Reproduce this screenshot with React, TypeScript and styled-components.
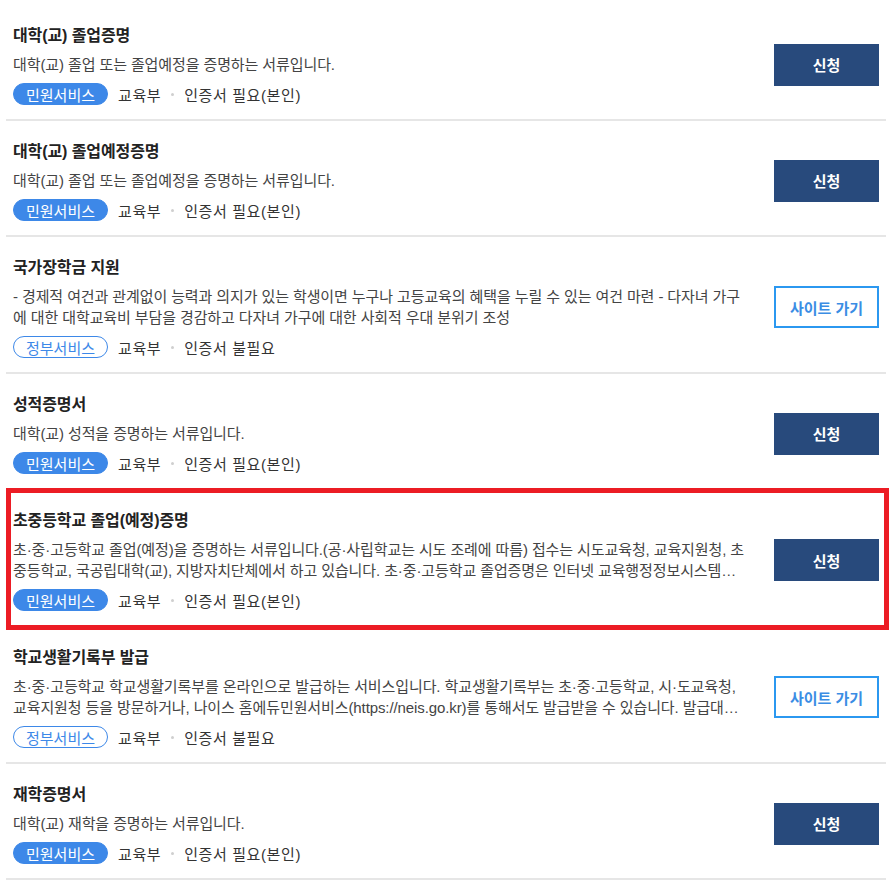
import React from "react";
import styled, { createGlobalStyle } from "styled-components";

const GlobalStyle = createGlobalStyle`
  * { box-sizing: border-box; }
  body {
    margin: 0;
    background: #ffffff;
    font-family: "Liberation Sans", "Noto Sans CJK KR", sans-serif;
    color: #333;
  }
`;

type Kind = "civil" | "gov";
type Action = "apply" | "site";

interface Service {
  title: string;
  desc: string;
  kind: Kind;
  cert: string;
  action: Action;
  highlighted?: boolean;
}

const services: Service[] = [
  {
    title: "대학(교) 졸업증명",
    desc: "대학(교) 졸업 또는 졸업예정을 증명하는 서류입니다.",
    kind: "civil",
    cert: "인증서 필요(본인)",
    action: "apply",
  },
  {
    title: "대학(교) 졸업예정증명",
    desc: "대학(교) 졸업 또는 졸업예정을 증명하는 서류입니다.",
    kind: "civil",
    cert: "인증서 필요(본인)",
    action: "apply",
  },
  {
    title: "국가장학금 지원",
    desc: "- 경제적 여건과 관계없이 능력과 의지가 있는 학생이면 누구나 고등교육의 혜택을 누릴 수 있는 여건 마련 - 다자녀 가구에 대한 대학교육비 부담을 경감하고 다자녀 가구에 대한 사회적 우대 분위기 조성",
    kind: "gov",
    cert: "인증서 불필요",
    action: "site",
  },
  {
    title: "성적증명서",
    desc: "대학(교) 성적을 증명하는 서류입니다.",
    kind: "civil",
    cert: "인증서 필요(본인)",
    action: "apply",
  },
  {
    title: "초중등학교 졸업(예정)증명",
    desc: "초·중·고등학교 졸업(예정)을 증명하는 서류입니다.(공·사립학교는 시도 조례에 따름) 접수는 시도교육청, 교육지원청, 초중등학교, 국공립대학(교), 지방자치단체에서 하고 있습니다. 초·중·고등학교 졸업증명은 인터넷 교육행정정보시스템에서도 발급받을 수 있습니다.",
    kind: "civil",
    cert: "인증서 필요(본인)",
    action: "apply",
    highlighted: true,
  },
  {
    title: "학교생활기록부 발급",
    desc: "초·중·고등학교 학교생활기록부를 온라인으로 발급하는 서비스입니다. 학교생활기록부는 초·중·고등학교, 시·도교육청, 교육지원청 등을 방문하거나, 나이스 홈에듀민원서비스(https://neis.go.kr)를 통해서도 발급받을 수 있습니다. 발급대상은 졸업생 및 재학생입니다.",
    kind: "gov",
    cert: "인증서 불필요",
    action: "site",
  },
  {
    title: "재학증명서",
    desc: "대학(교) 재학을 증명하는 서류입니다.",
    kind: "civil",
    cert: "인증서 필요(본인)",
    action: "apply",
  },
];

const List = styled.ul`
  list-style: none;
  margin: 0;
  padding: 5px 6px 0;
`;

const Item = styled.li`
  position: relative;
  display: flex;
  align-items: center;
  gap: 26px;
  padding: 19px 7px 14px;
  border-bottom: 2px solid #e6e6e6;
`;

const Highlight = styled.span`
  position: absolute;
  top: -2px;
  left: 0;
  right: -3px;
  bottom: -5px;
  border: 5px solid #ec1c24;
  pointer-events: none;
`;

const Content = styled.div`
  flex: 1;
  min-width: 0;
`;

const Title = styled.h3`
  margin: 0;
  font-size: 16px;
  line-height: 24px;
  font-weight: 700;
  color: #222;
  letter-spacing: -0.1px;
`;

const Desc = styled.p`
  margin: 6px 0 0;
  font-size: 15px;
  line-height: 21px;
  color: #444;
  letter-spacing: -0.1px;
  display: -webkit-box;
  -webkit-box-orient: vertical;
  -webkit-line-clamp: 2;
  overflow: hidden;
`;

const Meta = styled.div`
  margin-top: 8px;
  display: flex;
  align-items: center;
  gap: 10px;
  height: 22px;
  font-size: 15px;
  color: #333;
`;

const MetaText = styled.span`
  letter-spacing: 0.6px;
`;

const Badge = styled.span<{ $kind: Kind }>`
  display: inline-flex;
  align-items: center;
  justify-content: center;
  height: 22px;
  padding: 0 12px;
  border-radius: 11px;
  font-size: 15px;
  border: 1px solid #3d88e8;
  background: ${(p) => (p.$kind === "civil" ? "#3d88e8" : "#ffffff")};
  color: ${(p) => (p.$kind === "civil" ? "#ffffff" : "#3d88e8")};
`;

const Dot = styled.span`
  width: 3px;
  height: 3px;
  border-radius: 50%;
  background: #cfcfcf;
`;

const ActionButton = styled.button<{ $variant: Action }>`
  flex: none;
  width: 105px;
  height: 42px;
  font-family: inherit;
  font-size: 15px;
  font-weight: 700;
  cursor: pointer;
  border: ${(p) => (p.$variant === "apply" ? "none" : "2px solid #2b98f0")};
  background: ${(p) => (p.$variant === "apply" ? "#284a7c" : "#ffffff")};
  color: ${(p) => (p.$variant === "apply" ? "#ffffff" : "#3a8de4")};
`;

export default function App() {
  return (
    <>
      <GlobalStyle />
      <List>
        {services.map((s, i) => (
          <Item key={i}>
            <Content>
              <Title>{s.title}</Title>
              <Desc>{s.desc}</Desc>
              <Meta>
                <Badge $kind={s.kind}>{s.kind === "civil" ? "민원서비스" : "정부서비스"}</Badge>
                <MetaText>교육부</MetaText>
                <Dot />
                <MetaText>{s.cert}</MetaText>
              </Meta>
            </Content>
            <ActionButton $variant={s.action}>
              {s.action === "apply" ? "신청" : "사이트 가기"}
            </ActionButton>
            {s.highlighted && <Highlight />}
          </Item>
        ))}
      </List>
    </>
  );
}
